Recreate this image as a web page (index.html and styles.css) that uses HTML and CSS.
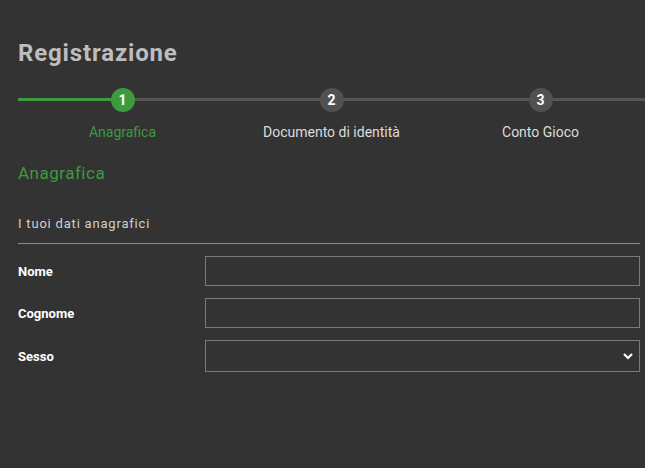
FILE: index.html
```html
<!DOCTYPE html>
<html lang="it">
<head>
<meta charset="utf-8">
<title>Registrazione</title>
<link rel="stylesheet" href="styles.css">
</head>
<body>
<main class="page">
  <h1 class="title">Registrazione</h1>
  <ol class="stepper">
    <li class="step active">
      <span class="dot">1</span>
      <span class="step-label">Anagrafica</span>
    </li>
    <li class="step">
      <span class="dot">2</span>
      <span class="step-label">Documento di identità</span>
    </li>
    <li class="step">
      <span class="dot">3</span>
      <span class="step-label">Conto Gioco</span>
    </li>
  </ol>
  <h2 class="section-title">Anagrafica</h2>
  <h3 class="subsection">I tuoi dati anagrafici</h3>
  <form class="form">
    <label class="field-label" for="nome">Nome</label>
    <input class="field-input" id="nome" type="text">
    <label class="field-label" for="cognome">Cognome</label>
    <input class="field-input" id="cognome" type="text">
    <label class="field-label" for="sesso">Sesso</label>
    <div class="select-wrap">
      <select class="field-input field-select" id="sesso">
        <option></option>
        <option>Maschio</option>
        <option>Femmina</option>
      </select>
      <svg class="chevron" width="10" height="8" viewBox="0 0 10 8"><path d="M1 2 L5 6 L9 2" fill="none" stroke="#fff" stroke-width="2.2"/></svg>
    </div>
  </form>
</main>
</body>
</html>
```
FILE: styles.css
```css
html, body {
  margin: 0;
  padding: 0;
  background: #333333;
  overflow: hidden;
}
body {
  font-family: Roboto, "Noto Sans", sans-serif;
  color: #e0e0e0;
}
.page {
  padding: 39px 5px 0 18px;
}
.title {
  margin: 0;
  font-size: 24px;
  line-height: 28px;
  font-weight: 700;
  letter-spacing: 0.85px;
  color: #bdbdbd;
}
.stepper {
  list-style: none;
  margin: 21px 0 0 0;
  padding: 0;
  display: grid;
  grid-template-columns: repeat(3, 209px);
  width: 627px;
}
.step {
  position: relative;
  display: flex;
  flex-direction: column;
  align-items: center;
}
.step::before {
  content: "";
  position: absolute;
  left: 0;
  right: -2px;
  top: 10px;
  height: 3px;
  background: #555555;
}
.step.active::before {
  background: linear-gradient(to right, #3e9a3e 50%, #555555 50%);
}
.dot {
  position: relative;
  width: 24px;
  height: 24px;
  border-radius: 50%;
  background: #505150;
  color: #ffffff;
  font-weight: 700;
  font-size: 14px;
  line-height: 24px;
  text-align: center;
}
.step.active .dot {
  background: #3e9a3e;
}
.step-label {
  margin-top: 11px;
  font-size: 14px;
  line-height: 18px;
  color: #dcdcdc;
}
.step.active .step-label {
  color: #3e9a3e;
}
.section-title {
  margin: 21px 0 0 0;
  font-size: 17px;
  line-height: 22px;
  font-weight: 400;
  letter-spacing: 0.5px;
  color: #3e9a3e;
}
.subsection {
  margin: 31px 0 0 0;
  font-size: 13px;
  line-height: 18px;
  font-weight: 400;
  letter-spacing: 0.8px;
  color: #d0d0d0;
  padding-bottom: 10px;
  border-bottom: 1px solid #8a8a8a;
  width: 622px;
}
.form {
  display: grid;
  grid-template-columns: 187px 435px;
  row-gap: 12px;
  align-items: center;
  margin-top: 12px;
}
.field-label {
  font-size: 13px;
  font-weight: 700;
  color: #ffffff;
}
.field-input {
  box-sizing: border-box;
  width: 100%;
  height: 30px;
  margin: 0;
  background: #333333;
  border: 1px solid #7a7a7a;
  border-radius: 0;
  color: #ffffff;
  font-family: inherit;
  font-size: 13px;
  padding: 0 8px;
  outline: none;
}
.select-wrap {
  position: relative;
}
.field-select {
  height: 32px;
  appearance: none;
  -webkit-appearance: none;
  display: block;
}
.chevron {
  position: absolute;
  right: 7px;
  top: 12px;
  pointer-events: none;
}
```
